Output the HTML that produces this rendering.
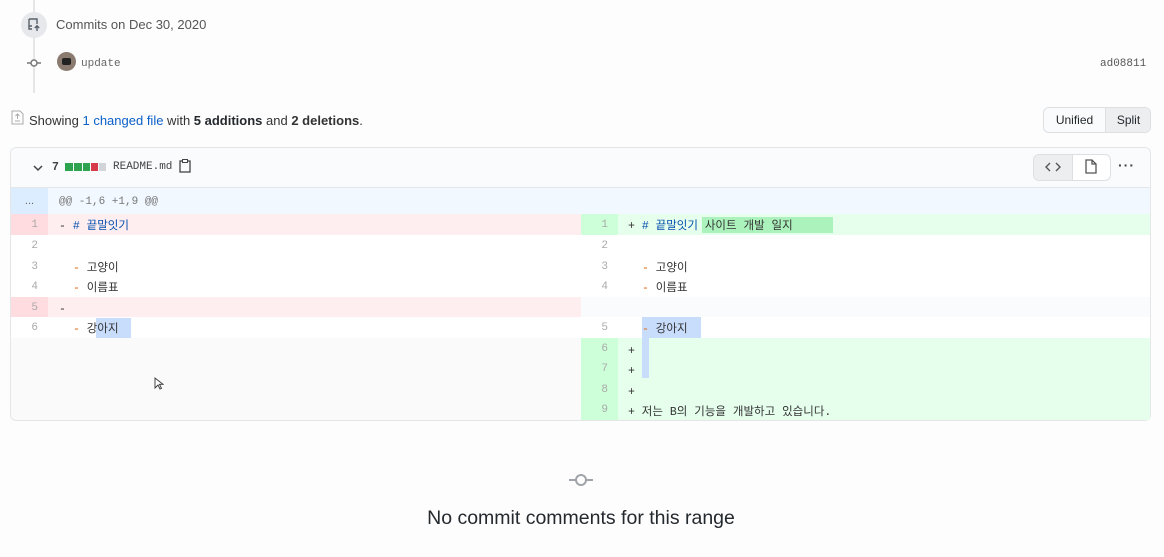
<!DOCTYPE html>
<html><head><meta charset="utf-8"><style>
*{margin:0;padding:0;box-sizing:border-box}
body{width:1164px;height:557px;background:#fdfdfd;font-family:"Liberation Sans","Noto Sans CJK KR",sans-serif;color:#24292e;position:relative;overflow:hidden}
.a{position:absolute}
.mono{font-family:"Liberation Mono","Noto Sans CJK KR",monospace;font-size:11.5px}
.num{color:#aaa;font-family:"Liberation Mono",monospace;font-size:11px;text-align:right;padding-right:10px;line-height:22px}
.code{line-height:20px;font-family:"Liberation Mono","Noto Sans CJK KR",monospace;font-size:11.5px;color:#333;white-space:pre}
</style></head><body>
<div class="a" style="left:33px;top:0;width:2px;height:93px;background:#e4e6e8"></div>
<div class="a" style="left:21px;top:12px;width:26px;height:26px;border-radius:50%;background:#e6e8eb"></div>
<svg class="a" style="left:26px;top:17px" width="16" height="16" viewBox="0 0 16 16"><path d="M3 2h8v5M6 12H3V2M3 9h3" fill="none" stroke="#586069" stroke-width="1.4"/><path d="M11 14V9M8.8 11l2.2-2.2 2.2 2.2" fill="none" stroke="#586069" stroke-width="1.4"/></svg>
<div class="a" style="left:56px;top:17px;font-size:13px;color:#555">Commits on Dec 30, 2020</div>
<svg class="a" style="left:26px;top:57px" width="16" height="12"><line x1="1" y1="6" x2="15" y2="6" stroke="#777" stroke-width="1.5"/><circle cx="8" cy="6" r="3" fill="#fff" stroke="#777" stroke-width="1.5"/></svg>
<div class="a" style="left:57px;top:52px;width:19px;height:19px;border-radius:50%;background:#8a7a70"><div class="a" style="left:5px;top:6px;width:9px;height:7px;background:#222;border-radius:2px"></div></div>
<div class="a mono" style="left:81px;top:58px;color:#666;font-size:11px">update</div>
<div class="a mono" style="left:1100px;top:58px;color:#555;font-size:11px">ad08811</div>
<svg class="a" style="left:11px;top:110px" width="13" height="15" viewBox="0 0 13 15"><path d="M1 1h8l3 3v10H1z" fill="none" stroke="#aaa"/><path d="M6.5 4v5M4.5 6l2-2 2 2M4 11h5" fill="none" stroke="#aaa"/></svg>
<div class="a" style="left:29px;top:113px;font-size:13px;color:#333">Showing <span style="color:#0a5fc9">1 changed file</span> with <b style="color:#24292e">5 additions</b> and <b>2 deletions</b>.</div>
<div class="a" style="left:1043px;top:107px;width:108px;height:26px;border:1px solid #dde0e3;border-radius:6px;background:#fafbfc;font-size:12px;overflow:hidden">
<div class="a" style="left:0;top:0;width:61px;height:24px;line-height:24px;text-align:center">Unified</div>
<div class="a" style="left:61px;top:0;width:46px;height:24px;line-height:24px;text-align:center;background:#eceef0;border-left:1px solid #dde0e3">Split</div></div>
<div class="a" style="left:10px;top:147px;width:1141px;height:274px;border:1px solid #e4e6e8;border-radius:6px;background:#fafafa;overflow:hidden">
 <div class="a" style="left:0;top:0;width:1141px;height:40px;background:#fafbfc;border-bottom:1px solid #e4e6e8"></div>
</div>
<svg class="a" style="left:32px;top:163px" width="12" height="10"><path d="M2 3l4 4 4-4" fill="none" stroke="#444" stroke-width="1.5"/></svg>
<div class="a mono" style="left:52px;top:161px;font-weight:bold;color:#444">7</div>
<div class="a" style="left:65px;top:163px;width:8px;height:8px;background:#2ea44f"></div>
<div class="a" style="left:74px;top:163px;width:8px;height:8px;background:#2ea44f"></div>
<div class="a" style="left:83px;top:163px;width:7px;height:8px;background:#2ea44f"></div>
<div class="a" style="left:91px;top:163px;width:7px;height:8px;background:#d73a49"></div>
<div class="a" style="left:99px;top:163px;width:7px;height:8px;background:#d1d5da"></div>
<div class="a mono" style="left:113px;top:161px;color:#444;font-size:11px">README.md</div>
<svg class="a" style="left:179px;top:159px" width="12" height="14"><rect x="1" y="2" width="10" height="11" fill="none" stroke="#444" stroke-width="1.3"/><rect x="3.5" y="0.5" width="5" height="3" fill="#fff" stroke="#444"/></svg>
<div class="a" style="left:1033px;top:154px;width:78px;height:27px;border:1px solid #dde0e3;border-radius:6px;background:#fff;overflow:hidden"><div class="a" style="left:0;top:0;width:39px;height:25px;background:#eceef0;border-right:1px solid #dde0e3"></div></div>
<svg class="a" style="left:1045px;top:161px" width="16" height="12"><path d="M5 2L1 6l4 4M11 2l4 4-4 4" fill="none" stroke="#555" stroke-width="1.4"/></svg>
<svg class="a" style="left:1085px;top:159px" width="12" height="15"><path d="M1 1h6l4 4v9H1z M7 1v4h4" fill="none" stroke="#555" stroke-width="1.3"/></svg>
<div class="a" style="left:1118px;top:157px;font-size:14px;color:#444;letter-spacing:1px;font-weight:bold">···</div>
<div class="a" style="left:11px;top:188px;width:1139px;height:26px;background:#f1f8ff"></div>
<div class="a" style="left:11px;top:188px;width:37px;height:26px;background:#dbedff;color:#666;font-size:11px;text-align:center;line-height:26px">...</div>
<div class="a mono" style="left:59px;top:196px;color:#777;font-size:11px">@@ -1,6 +1,9 @@</div>
<div class="a" style="left:11px;top:214px;width:570px;height:124px;background:#fff"></div>
<div class="a" style="left:11px;top:214px;width:570px;height:21px;background:#ffeef0"></div>
<div class="a" style="left:11px;top:214px;width:37px;height:21px;background:#ffdce0"></div>
<div class="a" style="left:11px;top:297px;width:570px;height:20px;background:#ffeef0"></div>
<div class="a" style="left:11px;top:297px;width:37px;height:20px;background:#ffdce0"></div>
<div class="a num" style="left:11px;top:214px;width:37px">1</div>
<div class="a num" style="left:11px;top:235px;width:37px">2</div>
<div class="a num" style="left:11px;top:256px;width:37px">3</div>
<div class="a num" style="left:11px;top:276px;width:37px">4</div>
<div class="a num" style="left:11px;top:297px;width:37px">5</div>
<div class="a num" style="left:11px;top:317px;width:37px">6</div>
<div class="a code" style="left:59px;top:217px">- <span style="color:#0550ae">#</span> <span style="color:#0550ae">끝말잇기</span></div>
<div class="a code" style="left:73px;top:259px"><span style="color:#e36209">-</span> 고양이</div>
<div class="a code" style="left:73px;top:279px"><span style="color:#e36209">-</span> 이름표</div>
<div class="a code" style="left:59px;top:300px">-</div>
<div class="a" style="left:96px;top:318px;width:35px;height:20px;background:#c8dcfb"></div>
<div class="a code" style="left:73px;top:320px"><span style="color:#e36209">-</span> 강아지</div>
<div class="a" style="left:581px;top:214px;width:569px;height:124px;background:#fff"></div>
<div class="a" style="left:581px;top:297px;width:569px;height:20px;background:#fafbfc"></div>
<div class="a" style="left:581px;top:214px;width:569px;height:21px;background:#e6ffed"></div>
<div class="a" style="left:581px;top:214px;width:37px;height:21px;background:#cdffd8"></div>
<div class="a" style="left:581px;top:338px;width:569px;height:82px;background:#e6ffed"></div>
<div class="a" style="left:581px;top:338px;width:37px;height:82px;background:#cdffd8"></div>
<div class="a num" style="left:581px;top:214px;width:37px">1</div>
<div class="a num" style="left:581px;top:235px;width:37px">2</div>
<div class="a num" style="left:581px;top:256px;width:37px">3</div>
<div class="a num" style="left:581px;top:276px;width:37px">4</div>
<div class="a num" style="left:581px;top:317px;width:37px">5</div>
<div class="a num" style="left:581px;top:338px;width:37px">6</div>
<div class="a num" style="left:581px;top:358px;width:37px">7</div>
<div class="a num" style="left:581px;top:379px;width:37px">8</div>
<div class="a num" style="left:581px;top:399px;width:37px">9</div>
<div class="a" style="left:702px;top:217px;width:131px;height:16px;background:#acf2bd"></div>
<div class="a code" style="left:628px;top:217px">+ <span style="color:#0550ae">#</span> <span style="color:#0550ae">끝말잇기</span> 사이트 개발 일지</div>
<div class="a code" style="left:642px;top:259px"><span style="color:#e36209">-</span> 고양이</div>
<div class="a code" style="left:642px;top:279px"><span style="color:#e36209">-</span> 이름표</div>
<div class="a" style="left:642px;top:317px;width:59px;height:21px;background:#c8dcfb"></div>
<div class="a" style="left:642px;top:338px;width:7px;height:40px;background:#c8dcfb"></div>
<div class="a code" style="left:642px;top:320px"><span style="color:#e36209">-</span> 강아지</div>
<div class="a code" style="left:628px;top:342px">+</div>
<div class="a code" style="left:628px;top:362px">+</div>
<div class="a code" style="left:628px;top:383px">+</div>
<div class="a code" style="left:628px;top:403px">+ 저는 B의 기능을 개발하고 있습니다.</div>
<svg class="a" style="left:154px;top:377px" width="10" height="14"><path d="M1 1v10l3-3 2 4 1.5-.7-2-4H9z" fill="#fff" stroke="#333" stroke-width="0.9"/></svg>
<svg class="a" style="left:568px;top:472px" width="26" height="16"><line x1="1" y1="8" x2="25" y2="8" stroke="#a0a4a8" stroke-width="2"/><circle cx="13" cy="8" r="5" fill="#fdfdfd" stroke="#a0a4a8" stroke-width="2"/></svg>
<div class="a" style="left:0;top:507px;width:1162px;text-align:center;font-size:19.5px;color:#24292e">No commit comments for this range</div>
</body></html>
